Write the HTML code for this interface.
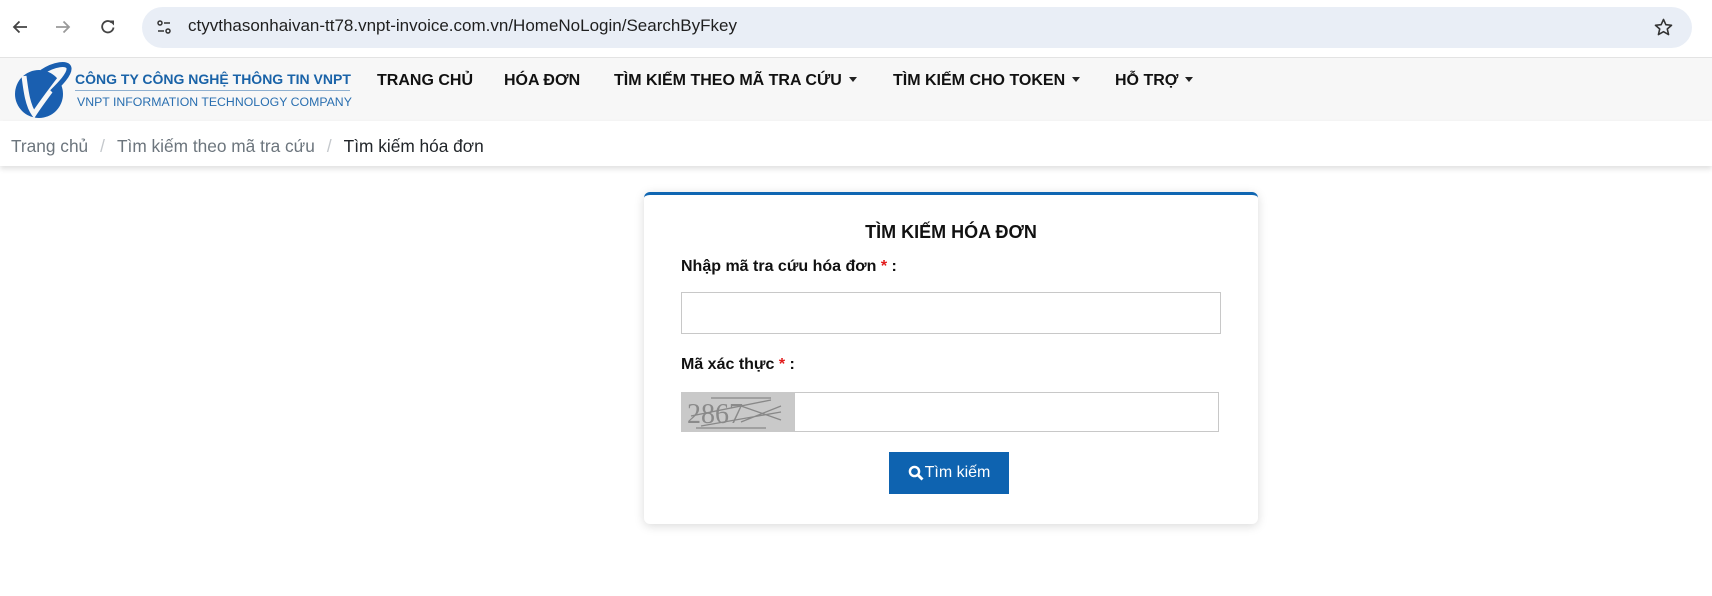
<!DOCTYPE html>
<html><head><meta charset="utf-8"><style>
*{box-sizing:border-box;margin:0;padding:0}
body{width:1712px;height:596px;overflow:hidden;background:#fff;font-family:"Liberation Sans",Arial,sans-serif;position:relative}
.abs{position:absolute}
.nav{left:0;top:57px;width:1712px;height:64px;background:#f7f7f7;border-top:1px solid #e3e3e3}
.ni{top:72px;font-weight:bold;font-size:16px;color:#111;white-space:nowrap}
.caret{display:inline-block;width:0;height:0;border-left:4px solid transparent;border-right:4px solid transparent;border-top:5px solid #222;vertical-align:middle;margin-left:7px;margin-top:-3px}
.bc{left:0;top:121px;width:1712px;height:45px;background:#fff;box-shadow:0 3px 5px rgba(0,0,0,.12);font-size:17.3px;color:#6c757d;padding:15px 0 0 11px;white-space:nowrap}
.bc span.s{color:#c4c8cc;margin:0 12px}
.card{left:644px;top:192px;width:614px;height:332px;background:#fff;border-top:3px solid #0f66b2;border-radius:6px;box-shadow:0 2px 10px rgba(0,0,0,.15)}
.lbl{font-weight:bold;font-size:16px;color:#111}
.req{color:#e21b1b}
.inp{border:1px solid #c8c8c8;background:#fff}
</style></head><body>
<svg class="abs" style="left:10px;top:17px" width="20" height="20" viewBox="0 0 20 20"><path d="M17 10H4M9.5 4.5L4 10l5.5 5.5" stroke="#444" stroke-width="1.8" fill="none"/></svg>
<svg class="abs" style="left:53px;top:17px" width="20" height="20" viewBox="0 0 20 20"><path d="M3 10h13M10.5 4.5L16 10l-5.5 5.5" stroke="#9a9a9a" stroke-width="1.8" fill="none"/></svg>
<svg class="abs" style="left:98px;top:17px" width="20" height="20" viewBox="0 0 20 20"><path d="M15.5 10.5A5.7 5.7 0 1 1 13.8 5.6" stroke="#444" stroke-width="1.8" fill="none"/><path d="M11 3.5h5v5z" fill="#444"/></svg>
<div class="abs" style="left:142px;top:7px;width:1550px;height:41px;background:#e9eef6;border-radius:21px"></div>
<svg class="abs" style="left:155px;top:18px" width="18" height="18" viewBox="0 0 18 18"><circle cx="5" cy="5" r="2" stroke="#333" stroke-width="1.5" fill="none"/><path d="M9 5h6M3 13h6" stroke="#333" stroke-width="1.5"/><circle cx="13" cy="13" r="2" stroke="#333" stroke-width="1.5" fill="none"/></svg>
<div class="abs" style="left:188px;top:16px;font-size:17px;color:#1f1f1f;white-space:nowrap">ctyvthasonhaivan-tt78.vnpt-invoice.com.vn/HomeNoLogin/SearchByFkey</div>
<svg class="abs" style="left:1653px;top:17px" width="21" height="21" viewBox="0 0 24 24"><path d="M12 2.8l2.7 6 6.5.6-4.9 4.3 1.5 6.4L12 16.8l-5.8 3.3 1.5-6.4-4.9-4.3 6.5-.6z" stroke="#333" stroke-width="1.8" fill="none" stroke-linejoin="round"/></svg>
<div class="abs nav"></div>
<svg class="abs" style="left:12px;top:62px" width="60" height="58" viewBox="0 0 60 58">
<circle cx="27" cy="32" r="24" fill="#1a5fb0"/>
<path d="M12 14C14 30 16 44 22 52 C30 40 42 24 56 6" stroke="#f7f7f7" stroke-width="5" fill="none"/>
<path d="M30 10C42 2 56 0 57 6 58 12 48 22 40 30" stroke="#1a5fb0" stroke-width="5" fill="none"/>
</svg>
<div class="abs" style="left:75px;top:71px;font-weight:bold;font-size:14px;color:#1a63a8;white-space:nowrap">CÔNG TY CÔNG NGHỆ THÔNG TIN VNPT</div>
<div class="abs" style="left:75px;top:90px;width:275px;height:1px;background:#8fb0d0"></div>
<div class="abs" style="left:77px;top:95px;font-size:12.3px;color:#2a6fb0;white-space:nowrap">VNPT INFORMATION TECHNOLOGY COMPANY</div>
<div class="abs ni" style="left:377px">TRANG CHỦ</div>
<div class="abs ni" style="left:504px">HÓA ĐƠN</div>
<div class="abs ni" style="left:614px">TÌM KIẾM THEO MÃ TRA CỨU<span class="caret"></span></div>
<div class="abs ni" style="left:893px">TÌM KIẾM CHO TOKEN<span class="caret"></span></div>
<div class="abs ni" style="left:1115px">HỖ TRỢ<span class="caret"></span></div>
<div class="abs bc">Trang chủ<span class="s">/</span>Tìm kiếm theo mã tra cứu<span class="s">/</span><span style="color:#212529">Tìm kiếm hóa đơn</span></div>
<div class="abs card"></div>
<div class="abs" style="left:644px;top:222px;width:614px;text-align:center;font-weight:bold;font-size:18px;color:#111">TÌM KIẾM HÓA ĐƠN</div>
<div class="abs lbl" style="left:681px;top:258px">Nhập mã tra cứu hóa đơn <span class="req">*</span> :</div>
<div class="abs inp" style="left:681px;top:292px;width:540px;height:42px"></div>
<div class="abs lbl" style="left:681px;top:356px">Mã xác thực <span class="req">*</span> :</div>
<svg class="abs" style="left:681px;top:392px" width="113" height="40" viewBox="0 0 113 40"><rect width="113" height="40" fill="#c9c9c9"/><text x="6" y="31" font-family="Liberation Serif,serif" font-size="28" fill="#8a8a8a">2867</text><path d="M10 24L90 8M20 34L100 20M30 6h60M60 30l40-16M60 14l40 14M15 36h70" stroke="#888" stroke-width="1.3"/></svg>
<div class="abs inp" style="left:794px;top:392px;width:425px;height:40px"></div>
<div class="abs" style="left:889px;top:452px;width:120px;height:42px;background:#0e63b0;color:#fff;font-size:16px;display:flex;align-items:center;justify-content:center"><svg width="16" height="16" viewBox="0 0 16 16" style="margin-right:1px"><circle cx="6.5" cy="6.5" r="4.6" stroke="#fff" stroke-width="2.4" fill="none"/><path d="M10 10l4.5 4.5" stroke="#fff" stroke-width="2.8"/></svg>Tìm kiếm</div>
</body></html>
